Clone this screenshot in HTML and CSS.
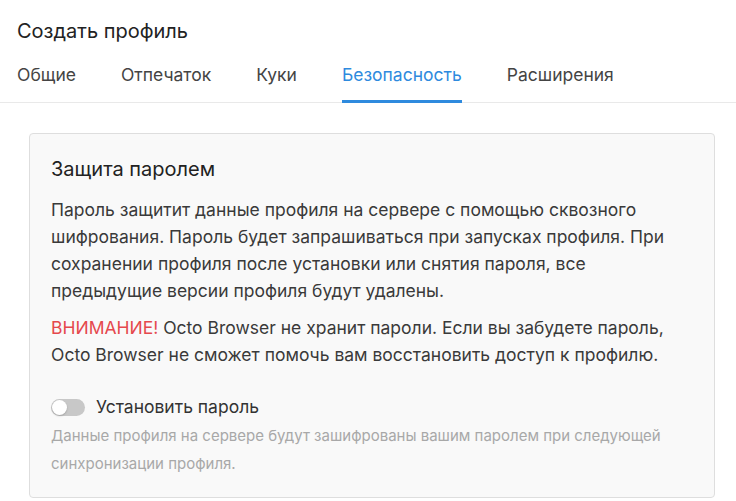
FILE: index.html
```html
<!DOCTYPE html>
<html lang="ru">
<head>
    <meta charset="UTF-8">
    <meta name="viewport" content="width=device-width, initial-scale=1.0">
    <title>Создать профиль</title>
    <link rel="stylesheet" href="styles.css">
</head>
<body>
    <div class="header">
        <h1 class="title">Создать профиль</h1>
        <div class="tabs">
            <div class="tab">Общие</div>
            <div class="tab">Отпечаток</div>
            <div class="tab">Куки</div>
            <div class="tab active">Безопасность</div>
            <div class="tab">Расширения</div>
        </div>
    </div>

    <!-- Password section -->
    <div class="card">
        <h2 class="card-title">Защита паролем</h2>
        <p class="text">Пароль защитит данные профиля на сервере с помощью сквозного шифрования. Пароль будет запрашиваться при запусках профиля. При сохранении профиля после установки или снятия пароля, все предыдущие версии профиля будут удалены.</p>
        <p class="text warn-text"><span class="warn">ВНИМАНИЕ!</span> Octo Browser не хранит пароли. Если вы забудете пароль, Octo Browser не сможет помочь вам восстановить доступ к профилю.</p>
        <label class="switch-row">
            <span class="switch"><span class="knob"></span></span>
            Установить пароль
        </label>
        <p class="hint">Данные профиля на сервере будут зашифрованы вашим паролем при следующей синхронизации профиля.</p>
    </div>
</body>
</html>
```

FILE: styles.css
```css
body {
    margin: 0;
    font-family: Inter, "Noto Sans", sans-serif;
    color: #333;
    background: #fff;
}
.header {
    padding: 19px 17px 0;
    border-bottom: 1px solid #e9e9e9;
}
.title {
    margin: 0;
    font-size: 20px;
    line-height: 24px;
    font-weight: 400;
    color: #222;
}
.tabs {
    display: flex;
    gap: 45px;
    margin-top: 20px;
}
.tab {
    font-size: 17.5px;
    line-height: 24px;
    color: #444;
    padding-bottom: 13px;
    border-bottom: 3px solid transparent;
    margin-bottom: -1px;
}
.tab.active {
    color: #2e8ade;
    border-bottom-color: #2e8ade;
}
.card {
    margin: 30px 21px 0 29px;
    padding: 23px 21px 19px;
    background: #f9f9f9;
    border: 1px solid #dedede;
    border-radius: 4px;
}
.card-title {
    margin: 0;
    font-size: 20px;
    line-height: 24px;
    font-weight: 400;
    color: #222;
}
.text {
    margin: 15px 0 0;
    font-size: 17.5px;
    line-height: 27px;
    color: #3a3a3a;
}
.warn-text {
    margin-top: 10px;
}
.warn {
    color: #e5484d;
}
.switch-row {
    display: flex;
    align-items: center;
    gap: 11px;
    margin-top: 27px;
    font-size: 17.5px;
    line-height: 24px;
}
.switch {
    position: relative;
    width: 34px;
    height: 17px;
    border-radius: 9px;
    background: #c8c8c8;
}
.knob {
    position: absolute;
    left: 1px;
    top: 1px;
    width: 15px;
    height: 15px;
    border-radius: 50%;
    background: #fff;
    box-shadow: 0 1px 2px rgba(0, 0, 0, 0.2);
}
.hint {
    margin: 3px 0 0;
    font-size: 15px;
    line-height: 28px;
    color: #a8a8a8;
}
```
